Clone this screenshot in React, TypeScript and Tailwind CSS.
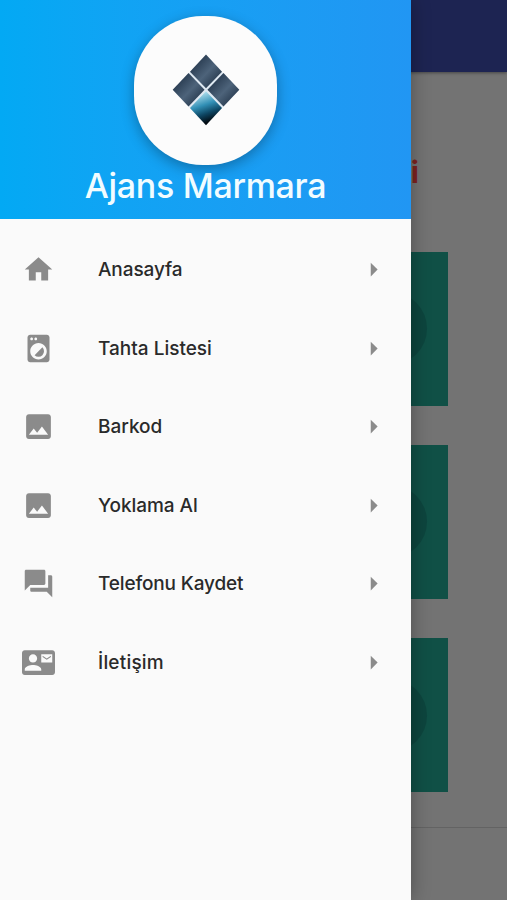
import {
  MdArrowRight,
  MdContactMail,
  MdForum,
  MdHome,
  MdImage,
  MdLocalLaundryService,
} from "react-icons/md";
import type { IconType } from "react-icons";

const items: { label: string; icon: IconType; tracking: string }[] = [
  { label: "Anasayfa", icon: MdHome, tracking: "tracking-[-0.1px]" },
  { label: "Tahta Listesi", icon: MdLocalLaundryService, tracking: "tracking-[0px]" },
  { label: "Barkod", icon: MdImage, tracking: "tracking-[0px]" },
  { label: "Yoklama Al", icon: MdImage, tracking: "tracking-[-0.05px]" },
  { label: "Telefonu Kaydet", icon: MdForum, tracking: "tracking-[-0.15px]" },
  { label: "İletişim", icon: MdContactMail, tracking: "tracking-[0.2px]" },
];

function Logo() {
  return (
    <svg width="68" height="72" viewBox="0 0 70 74" preserveAspectRatio="none">
      <defs>
        <linearGradient id="steel" x1="0.1" y1="0.2" x2="0.8" y2="0.9">
          <stop offset="0" stopColor="#24364b" />
          <stop offset="0.55" stopColor="#4d637a" />
          <stop offset="1" stopColor="#26384c" />
        </linearGradient>
        <linearGradient id="water" x1="0.3" y1="0.05" x2="0.6" y2="0.95">
          <stop offset="0" stopColor="#b5e3f0" />
          <stop offset="0.4" stopColor="#318fb5" />
          <stop offset="0.68" stopColor="#0d4562" />
          <stop offset="0.95" stopColor="#020a10" />
        </linearGradient>
      </defs>
      <path d="M35 1 69 37 35 73 1 37Z" fill="#dfe9f2" />
      <path d="M35 0.5 51.5 18.2 35 35.2 18.5 18.2Z" fill="url(#steel)" />
      <path d="M17 19.6 33.5 36.8 17 54 0.7 36.8Z" fill="url(#steel)" />
      <path d="M53 19.6 69.3 36.8 53 54 36.5 36.8Z" fill="url(#steel)" />
      <path d="M35 38.4 51.5 55.4 35 73.2 18.5 55.4Z" fill="url(#water)" />
    </svg>
  );
}

function Card() {
  return (
    <div className="flex h-[154px] w-[115px] items-center justify-center bg-[#105046]">
      <div className="size-[73px] rounded-full bg-[#0d453e]" />
    </div>
  );
}

function Page() {
  return (
    <div className="flex h-full flex-col bg-[#737373]">
      <div className="h-[71.5px] shrink-0 bg-[#1d2452] shadow-[0_1px_3px_rgba(0,0,0,0.4)]" />
      <div className="flex h-[756.5px] shrink-0 flex-col items-end border-b border-[#636363] pr-[59px]">
        <div className="flex h-[180.1px] items-start pt-[82.5px] pr-[29px] text-[30px] leading-[36px] font-bold text-[#7c2320]">
          i
        </div>
        <div className="flex flex-col gap-[39.3px]">
          <Card />
          <Card />
          <Card />
        </div>
      </div>
    </div>
  );
}

function Drawer() {
  return (
    <aside className="absolute inset-y-0 left-0 flex w-[411px] flex-col bg-[#fafafa] shadow-[0_0_18px_rgba(0,0,0,0.32)]">
      <header className="flex h-[219px] shrink-0 flex-col items-center bg-linear-to-r from-[#03a9f4] to-[#2196f3] pt-4">
        <div className="flex h-[148.5px] w-[143px] shrink-0 items-center justify-center rounded-[69px] bg-[#fcfcfc] pl-px shadow-[0_4px_14px_rgba(0,0,0,0.3)]">
          <Logo />
        </div>
        <h1 className="text-[34px] leading-[41px] font-medium tracking-[-0.3px] whitespace-nowrap text-[#f2fcff]">
          Ajans Marmara
        </h1>
      </header>
      <nav className="flex flex-col pt-[11.7px]">
        {items.map(({ label, icon: Icon, tracking }) => (
          <div key={label} className="flex h-[78.5px] items-center pr-[21px] pl-[22px]">
            <Icon size={33} className="shrink-0 text-[#8b8b8b]" />
            <span className={`ml-[43px] flex-1 pt-px text-[19px] font-medium whitespace-nowrap text-[#2a2a2a] ${tracking}`}>
              {label}
            </span>
            <MdArrowRight size={33} className="shrink-0 text-[#8b8b8b]" />
          </div>
        ))}
      </nav>
    </aside>
  );
}

export default function App() {
  return (
    <div className="relative h-[900px] w-[507px] overflow-hidden font-[Inter,sans-serif]">
      <Page />
      <Drawer />
    </div>
  );
}
